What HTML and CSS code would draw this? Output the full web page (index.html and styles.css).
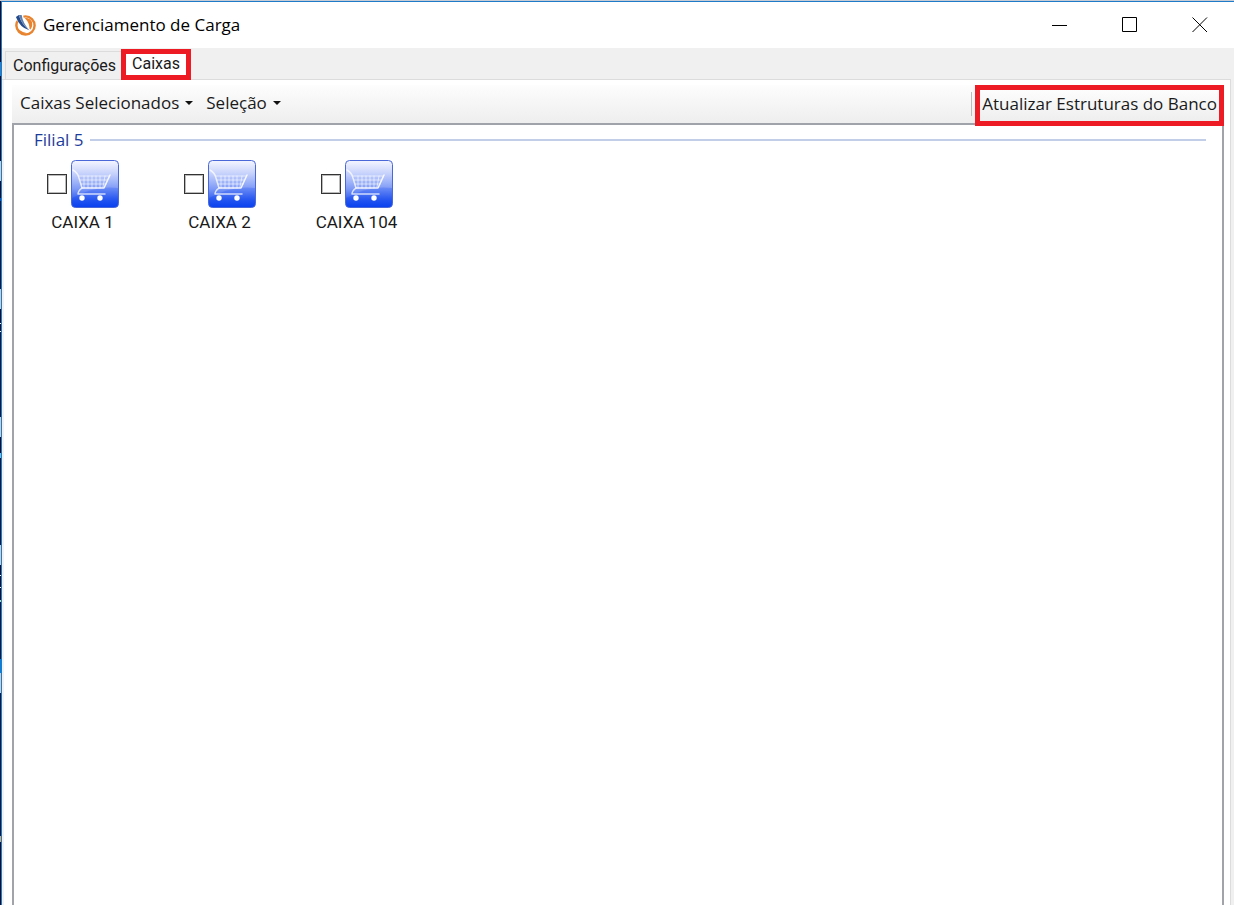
FILE: index.html
```html
<!DOCTYPE html>
<html lang="pt-BR">
<head>
  <meta charset="UTF-8">
  <meta name="viewport" content="width=device-width, initial-scale=1.0">
  <title>Gerenciamento de Carga</title>
  <link rel="stylesheet" href="styles.css">
</head>
<body>

  <!-- Shared cart icon -->
  <svg class="sprite" aria-hidden="true">
    <defs>
      <linearGradient id="cart-bg" x1="0" y1="0" x2="0" y2="1">
        <stop offset="0" stop-color="#f4f6ff"/>
        <stop offset="0.25" stop-color="#ccd6fc"/>
        <stop offset="0.6" stop-color="#7f9bf7"/>
        <stop offset="0.85" stop-color="#2a5af0"/>
        <stop offset="1" stop-color="#0a43f0"/>
      </linearGradient>
      <symbol id="cart" viewBox="0 0 48 48">
        <rect x="0.5" y="0.5" width="47" height="47" rx="4" fill="url(#cart-bg)" stroke="#4a68d8"/>
        <path d="M1 38 Q24 25 47 28 V44 Q47 47 44 47 H4 Q1 47 1 44 Z" fill="#0038f0" opacity="0.2"/>
        <g fill="none" stroke="#fff" stroke-linecap="round" stroke-linejoin="round">
          <path d="M2 10 Q7 13 8 18 L11 28 Q7 31 7 34 H34" stroke-width="1.5" opacity="0.75"/>
          <path d="M11 28 H33 L39 15" stroke-width="1.5" opacity="0.9"/>
          <path d="M8 16 H38 M9 20 H36 M10 24 H35 M13 16 V28 M17 16 V28 M21 16 V28 M25 16 V28 M29 16 V28 M34 16 L32 27" stroke-width="1" opacity="0.6"/>
        </g>
        <circle cx="11" cy="38" r="2.7" fill="#fff"/>
        <circle cx="29" cy="38" r="2.7" fill="#fff"/>
      </symbol>
    </defs>
  </svg>

  <div class="window">
    <header class="titlebar">
      <svg class="logo" viewBox="0 0 24 24" aria-hidden="true">
        <circle cx="12" cy="12" r="9.5" fill="#fff" stroke="#e8842f" stroke-width="2.5"/>
        <path d="M2 9 Q3 18 14 20 Q8 22 4 18 Q1 14 2 9 Z" fill="#e8842f"/>
        <path d="M11 4 Q19 4 19 11 Q19 15 16 17 Q17 10 11 4 Z" fill="#e8842f"/>
        <path d="M1 2 L9 0 Q11 9 18 18 Q6 15 1 2 Z" fill="#fff"/>
        <path d="M2 3 L5 1 Q8 11 16 17 Q6 14 2 3 Z" fill="#254a8c"/>
        <path d="M5 1 L8 1 Q9 9 16 17 Q8 11 5 1 Z" fill="#5f7fae"/>
      </svg>
      <h1>Gerenciamento de Carga</h1>
      <div class="controls">
        <button type="button" aria-label="Minimizar">
          <svg viewBox="0 0 16 16"><path d="M0 8.500H15"/></svg>
        </button>
        <button type="button" aria-label="Maximizar">
          <svg viewBox="0 0 16 16"><path d="M0.500 0.500H14.500V14.500H0.500Z"/></svg>
        </button>
        <button type="button" aria-label="Fechar">
          <svg viewBox="0 0 16 16"><path d="M0.500 0.500L15 15M15 0.500L0.500 15"/></svg>
        </button>
      </div>
    </header>

    <nav class="tabs" role="tablist">
      <button type="button" class="tab" role="tab" aria-selected="false">Configurações</button>
      <button type="button" class="tab active highlight" role="tab" aria-selected="true">Caixas</button>
    </nav>

    <main class="page">
      <div class="toolbar">
        <button type="button" class="menu">Caixas Selecionados</button>
        <button type="button" class="menu">Seleção</button>
        <span class="separator"></span>
        <button type="button" class="update highlight">Atualizar Estruturas do Banco</button>
      </div>

      <section class="list">
        <h2>Filial 5</h2>
        <div class="items">
          <label class="item">
            <span class="pick"><input type="checkbox"><svg class="cart"><use href="#cart"/></svg></span>
            CAIXA 1
          </label>
          <label class="item">
            <span class="pick"><input type="checkbox"><svg class="cart"><use href="#cart"/></svg></span>
            CAIXA 2
          </label>
          <label class="item">
            <span class="pick"><input type="checkbox"><svg class="cart"><use href="#cart"/></svg></span>
            CAIXA 104
          </label>
        </div>
      </section>
    </main>
  </div>

</body>
</html>
```

FILE: styles.css
```css
* {
  box-sizing: border-box;
}

/* desktop behind the window shows as a thin strip on the left */
body {
  margin: 0;
  height: 100vh;
  padding: 1px 0 0 1px;
  overflow: hidden;
  font-family: "Open Sans", "Noto Sans", sans-serif;
  color: #1a1a1a;
  background:
    linear-gradient(#c8ccd4, #c8ccd4) 0 0 / 100% 1px no-repeat,
    linear-gradient(
      #020a1c 62px, #2a7fc8 62px 76px, #020a1c 76px 161px,
      #d0cdc9 161px 181px, #020a1c 181px 198px, #0a4fb0 198px 201px,
      #041530 201px 289px, #d0cdc9 289px 309px, #020a1c 309px 323px,
      #fff 323px 324px, #020a1c 324px 331px, #fff 331px 332px,
      #041530 332px 417px, #d0cdc9 417px 437px, #020a1c 437px 453px,
      #6fc0e0 453px 458px, #041530 458px 545px, #d0cdc9 545px 565px,
      #020a1c 565px 575px, #fff 575px 576px, #020a1c 576px 587px,
      #fff 587px 588px, #020a1c 588px 600px, #b8d8a0 600px 602px,
      #041530 602px 659px, #0a7fd8 659px 673px, #d0cdc9 673px 693px,
      #041530 693px 836px, #e0a860 836px 842px, #020a1c 842px);
}

.sprite {
  position: absolute;
  width: 0;
  height: 0;
}

button {
  padding: 0;
  border: 0;
  background: none;
  font: inherit;
  color: inherit;
  white-space: nowrap;
}

.window {
  display: flex;
  flex-direction: column;
  height: 100%;
  border-top: 1px solid #1f7ac8;
  border-left: 1px solid #1f7ac8;
  background: #f0f0f0;
}

/* === TITLE BAR === */
.titlebar {
  display: flex;
  align-items: center;
  height: 46px;
  padding-left: 12px;
  background: #fff;
}

.logo {
  width: 23px;
  height: 23px;
}

h1 {
  margin: 0 auto 0 6px;
  font-size: 17px;
  font-weight: 400;
  line-height: 24px;
  color: #000;
}

.controls {
  display: flex;
  gap: 2px;
}

.controls button {
  display: grid;
  place-items: center;
  width: 68px;
  height: 46px;
}

.controls svg {
  width: 16px;
  height: 16px;
  fill: none;
  stroke: #000;
}

/* === TABS === */
.tabs {
  display: flex;
  align-items: flex-end;
  height: 32px;
  padding-left: 3px;
  font-family: Roboto, "Liberation Sans", sans-serif;
  font-size: 16px;
}

.tab {
  height: 29px;
  padding: 0 5px 0 7px;
  border: 1px solid #dcdcdc;
  border-right: 0;
}

.tab.active {
  height: 31px;
  padding: 0 6px 3px;
  background: #fff;
}

.highlight,
.tab.active {
  position: relative;
  border: 5px solid #ed1c24;
}

/* === TAB PAGE === */
.page {
  display: flex;
  flex: 1;
  flex-direction: column;
  margin-top: -1px;
  margin-right: 3px;
  padding: 5px 6px 0 10px;
  border: 1px solid #dcdcdc;
  border-width: 1px 1px 0 0;
  background: linear-gradient(90deg, #eef2fa 2px, #fff 2px);
}

.toolbar {
  display: flex;
  align-items: center;
  height: 38px;
  padding-left: 8px;
  font-size: 17px;
  background: linear-gradient(#fdfdfd, #eee);
}

.menu {
  display: flex;
  align-items: center;
  margin-right: 13px;
  padding-bottom: 3px;
}

.menu::after {
  content: "";
  margin-left: 6px;
  border: 4px solid transparent;
  border-top-color: #111;
  border-bottom: 0;
}

.separator {
  width: 1px;
  height: 24px;
  margin: 0 3px 0 auto;
  background: #bbb;
}

.update {
  align-self: flex-start;
  height: 41px;
  padding: 0 2px 5px;
  background: linear-gradient(#fdfdfd, #eee);
}

/* === LIST === */
.list {
  flex: 1;
  border: 2px solid #a0a4aa;
  border-bottom: 0;
}

.list h2 {
  display: flex;
  align-items: center;
  gap: 6px;
  margin: 3px 16px 8px 20px;
  font-size: 17px;
  font-weight: 400;
  line-height: 24px;
  color: #1c3c9c;
}

.list h2::after {
  content: "";
  flex: 1;
  height: 2px;
  background: #c2cee8;
}

.items {
  display: flex;
  flex-wrap: wrap;
}

.item {
  display: flex;
  flex-direction: column;
  align-items: center;
  width: 137px;
  font-family: Roboto, "Liberation Sans", sans-serif;
  font-size: 17px;
  line-height: 28px;
}

.pick {
  display: flex;
  align-items: center;
  gap: 4px;
}

.pick input {
  appearance: none;
  width: 20px;
  height: 20px;
  margin: 0;
  border: 1px solid #333;
  background: #fff;
  box-shadow: inset 0 0 0 1px #bbb;
}

.pick input:checked {
  background: #1d50f0;
}

.cart {
  width: 48px;
  height: 48px;
}
```
